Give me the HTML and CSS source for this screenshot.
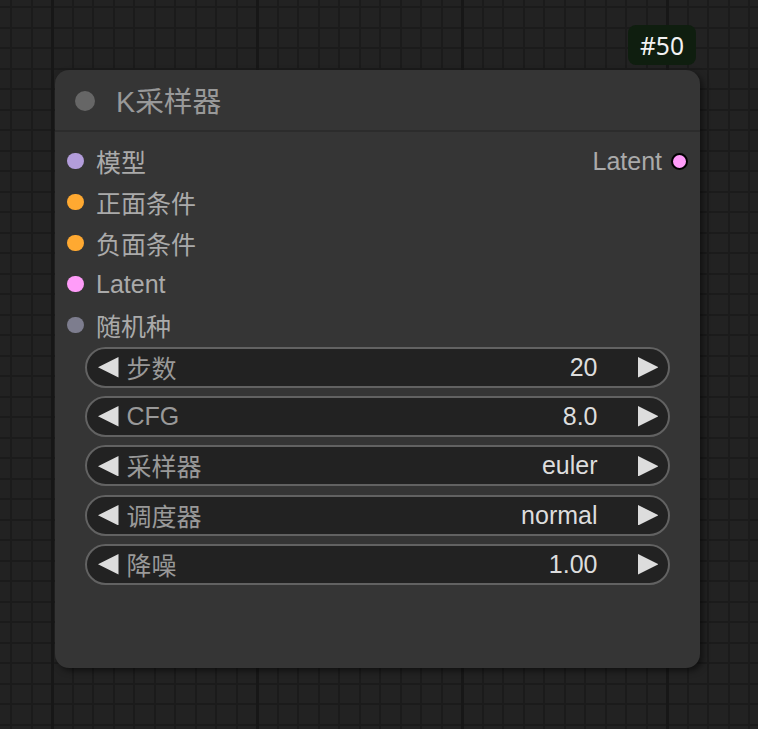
FILE: index.html
```html
<!DOCTYPE html>
<html lang="zh">
<head>
<meta charset="utf-8">
<title>K采样器</title>
<link rel="stylesheet" href="styles.css">
</head>
<body>
<div class="canvas">
  <div class="node">
    <div class="badge">#50</div>
    <div class="title">
      <span class="title-dot"></span>
      <span class="title-text">K采样器</span>
    </div>
    <div class="node-body">
      <div class="slots">
        <div class="slot">
          <span class="dot dot-model"></span><span class="slot-label">模型</span>
          <span class="out-label">Latent</span><span class="dot dot-latent dot-out"></span>
        </div>
        <div class="slot"><span class="dot dot-cond"></span><span class="slot-label">正面条件</span></div>
        <div class="slot"><span class="dot dot-cond"></span><span class="slot-label">负面条件</span></div>
        <div class="slot"><span class="dot dot-latent"></span><span class="slot-label">Latent</span></div>
        <div class="slot"><span class="dot dot-seed"></span><span class="slot-label">随机种</span></div>
      </div>
      <div class="widgets">
        <div class="widget">
          <svg class="arrow arrow-left" viewBox="0 0 10 10"><path d="M10 0L0 5L10 10Z"/></svg>
          <span class="w-label">步数</span><span class="w-value">20</span>
          <svg class="arrow arrow-right" viewBox="0 0 10 10"><path d="M0 0L10 5L0 10Z"/></svg>
        </div>
        <div class="widget">
          <svg class="arrow arrow-left" viewBox="0 0 10 10"><path d="M10 0L0 5L10 10Z"/></svg>
          <span class="w-label">CFG</span><span class="w-value">8.0</span>
          <svg class="arrow arrow-right" viewBox="0 0 10 10"><path d="M0 0L10 5L0 10Z"/></svg>
        </div>
        <div class="widget">
          <svg class="arrow arrow-left" viewBox="0 0 10 10"><path d="M10 0L0 5L10 10Z"/></svg>
          <span class="w-label">采样器</span><span class="w-value">euler</span>
          <svg class="arrow arrow-right" viewBox="0 0 10 10"><path d="M0 0L10 5L0 10Z"/></svg>
        </div>
        <div class="widget">
          <svg class="arrow arrow-left" viewBox="0 0 10 10"><path d="M10 0L0 5L10 10Z"/></svg>
          <span class="w-label">调度器</span><span class="w-value">normal</span>
          <svg class="arrow arrow-right" viewBox="0 0 10 10"><path d="M0 0L10 5L0 10Z"/></svg>
        </div>
        <div class="widget">
          <svg class="arrow arrow-left" viewBox="0 0 10 10"><path d="M10 0L0 5L10 10Z"/></svg>
          <span class="w-label">降噪</span><span class="w-value">1.00</span>
          <svg class="arrow arrow-right" viewBox="0 0 10 10"><path d="M0 0L10 5L0 10Z"/></svg>
        </div>
      </div>
    </div>
  </div>
</div>
</body>
</html>
```
FILE: styles.css
```css
html, body {
  margin: 0;
  padding: 0;
  width: 758px;
  height: 729px;
  overflow: hidden;
}
body {
  font-family: "Liberation Sans", "Noto Sans CJK SC", sans-serif;
  background-color: #222222;
  background-image:
    repeating-linear-gradient(90deg, transparent 0 51px, #171717 51px 54px, transparent 54px 205px),
    repeating-linear-gradient(90deg, transparent 0 10px, #1b1b1b 10px 12px, transparent 12px 20.5px),
    repeating-linear-gradient(180deg, transparent 0 6px, #1b1b1b 6px 8px, transparent 8px 20.5px);
}
.canvas {
  padding: 70px 0 0 55px;
}
.node {
  position: relative;
  width: 645px;
  height: 598px;
  background: #353535;
  border-radius: 14px;
  box-shadow: 3px 3px 6px rgba(0, 0, 0, 0.5);
  box-sizing: border-box;
}
.badge {
  position: absolute;
  right: 4px;
  top: -45px;
  width: 68px;
  height: 40px;
  border-radius: 8px;
  background: #0f1e0f;
  color: #f2f2f2;
  font-family: "Noto Sans", sans-serif;
  font-size: 24.6px;
  display: flex;
  align-items: center;
  justify-content: center;
}
.title {
  height: 60px;
  border-bottom: 2px solid #2c2c2c;
  display: flex;
  align-items: center;
  padding-left: 20px;
}
.title-dot {
  width: 20px;
  height: 20px;
  border-radius: 50%;
  background: #666666;
  margin-top: 1px;
}
.title-text {
  margin-left: 21px;
  font-size: 28.7px;
  color: #999999;
  margin-top: -2px;
}
.node-body {
  padding-top: 8.5px;
}
.slots {
  display: flex;
  flex-direction: column;
}
.slot {
  height: 41px;
  display: flex;
  align-items: center;
  padding-left: 12.3px;
  padding-right: 12px;
}
.dot {
  width: 16.4px;
  height: 16.4px;
  border-radius: 50%;
  flex: none;
}
.dot-model { background: #b39ddb; }
.dot-cond { background: #ffa931; }
.dot-latent { background: #ff9cf9; }
.dot-seed { background: #7d7d8e; }
.dot-out {
  box-sizing: border-box;
  border: 2px solid #000;
  width: 17px;
  height: 17px;
  margin-left: 9px;
}
.slot-label {
  margin-left: 12.3px;
  font-size: 25px;
  color: #aaaaaa;
  flex: 1;
}
.out-label {
  font-size: 25px;
  color: #aaaaaa;
}
.widgets {
  margin-top: 1.5px;
  padding: 0 30px;
  display: flex;
  flex-direction: column;
  gap: 8.2px;
}
.widget {
  height: 41px;
  box-sizing: border-box;
  border: 2px solid #626262;
  border-radius: 21px;
  background: #222222;
  display: flex;
  align-items: center;
  padding: 0 10px 0 11px;
  font-size: 25px;
}
.arrow {
  width: 20.5px;
  height: 20.5px;
  flex: none;
  fill: #dddddd;
}
.w-label {
  margin-left: 8px;
  color: #999999;
  flex: 1;
  margin-top: -1px;
}
.w-value {
  color: #dddddd;
  margin-right: 40px;
}
```
